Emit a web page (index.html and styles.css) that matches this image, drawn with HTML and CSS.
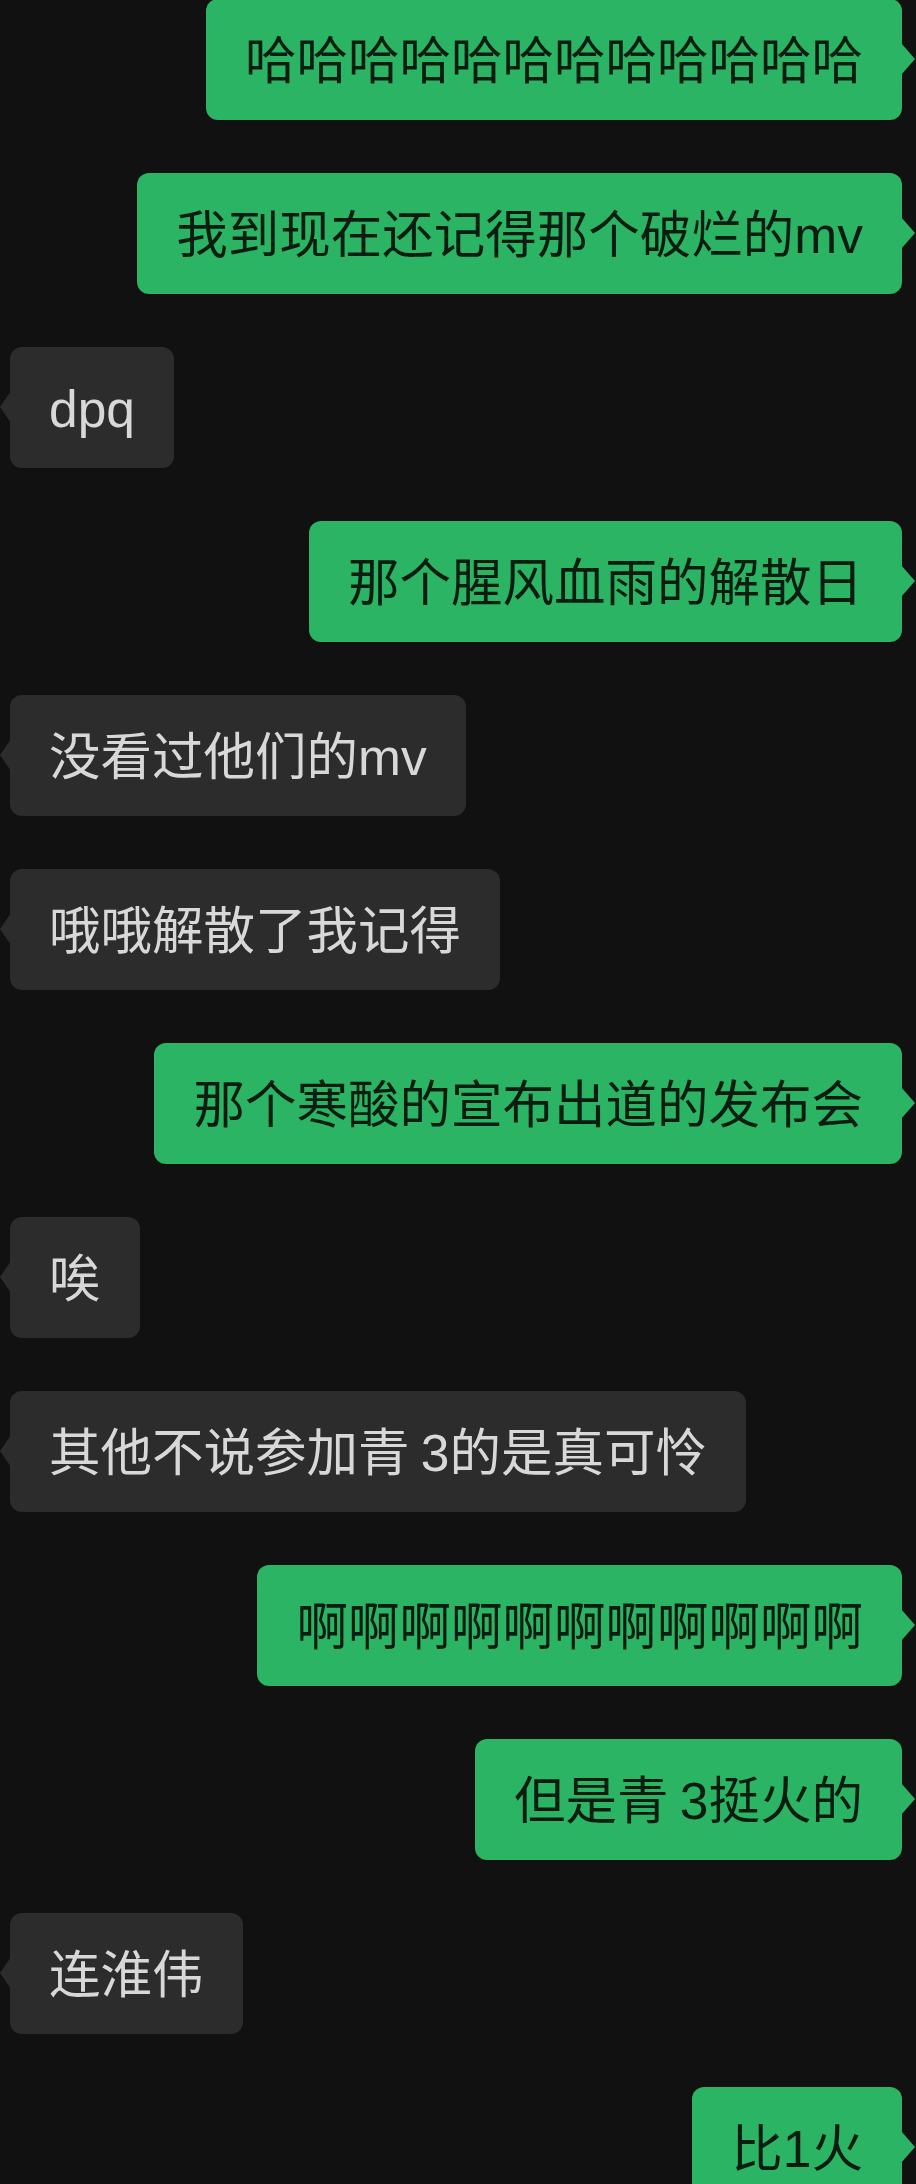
FILE: index.html
```html
<!DOCTYPE html>
<html lang="zh-CN">
<head>
    <meta charset="UTF-8">
    <meta name="viewport" content="width=device-width, initial-scale=1.0">
    <title>聊天记录</title>
    <link rel="stylesheet" href="styles.css">
</head>
<body>
    <div class="chat">
        <p class="msg me">哈哈哈哈哈哈哈哈哈哈哈哈</p>
        <p class="msg me">我到现在还记得那个破烂的mv</p>
        <p class="msg them">dpq</p>
        <p class="msg me">那个腥风血雨的解散日</p>
        <p class="msg them">没看过他们的mv</p>
        <p class="msg them">哦哦解散了我记得</p>
        <p class="msg me">那个寒酸的宣布出道的发布会</p>
        <p class="msg them">唉</p>
        <p class="msg them">其他不说参加青 3的是真可怜</p>
        <p class="msg me">啊啊啊啊啊啊啊啊啊啊啊</p>
        <p class="msg me">但是青 3挺火的</p>
        <p class="msg them">连淮伟</p>
        <p class="msg me">比1火</p>
    </div>
</body>
</html>
```

FILE: styles.css
```css
html, body {
    margin: 0;
    height: 100%;
    background: #111111;
    overflow: hidden;
}

.chat {
    display: flex;
    flex-direction: column;
    gap: 53px;
    margin-top: -1px;
    padding: 0 14px 0 10px;
    font-family: "Liberation Sans", "Noto Sans CJK SC", sans-serif;
}

.msg {
    position: relative;
    margin: 0;
    padding: 26px 39px 22px;
    font-size: 51.5px;
    line-height: 73px;
    word-spacing: -3px;
    border-radius: 12px;
    white-space: nowrap;
}

.msg::after {
    content: "";
    position: absolute;
    top: 44px;
    width: 14px;
    height: 32px;
}

.me {
    align-self: flex-end;
    background: #2ab463;
    color: #0b1c10;
}

.me::after {
    right: -13px;
    background: #2ab463;
    clip-path: polygon(0 0, 100% 50%, 0 100%);
}

.them {
    align-self: flex-start;
    background: #2c2c2c;
    color: #d8d8d8;
}

.them::after {
    left: -10px;
    width: 11px;
    background: #2c2c2c;
    clip-path: polygon(100% 0, 0 50%, 100% 100%);
}
```
